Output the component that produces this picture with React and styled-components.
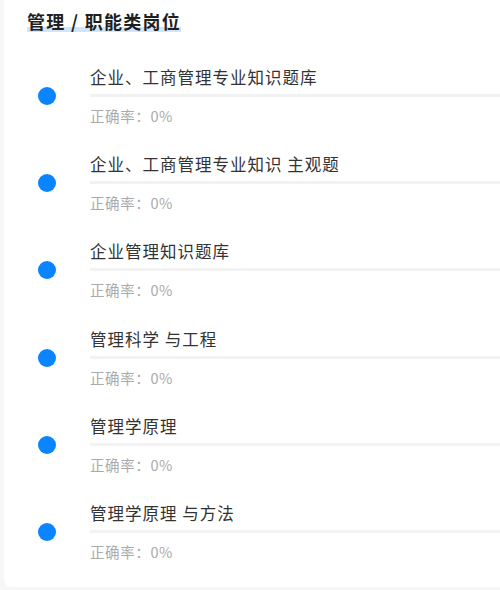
import React from "react";
import styled, { createGlobalStyle } from "styled-components";

const Global = createGlobalStyle`
  html, body { margin: 0; padding: 0; background: #f7f7f7; overflow: hidden; }
  body { font-family: "Noto Sans CJK SC", "Noto Sans", sans-serif; }
`;

const Page = styled.div`
  width: 500px;
  height: 590px;
  overflow: hidden;
`;

const Card = styled.section`
  margin: -10px 0 0 4px;
  width: 520px;
  height: 597px;
  box-sizing: border-box;
  background: #fff;
  border-radius: 8px;
  padding: 18px 0 0 23px;
`;

const Heading = styled.h2`
  margin: 0;
  font-size: 18px;
  line-height: 26px;
  font-weight: 700;
  color: #1f1f1f;
  letter-spacing: 1.3px;
`;

const Mark = styled.span`
  background: linear-gradient(to top, transparent 0, transparent 2px, #cfe5fb 2px, #cfe5fb 7px, transparent 7px);
`;

const List = styled.ul`
  list-style: none;
  margin: 31px 0 0;
  padding: 0;
  display: flex;
  flex-direction: column;
  gap: 25.2px;
`;

const Item = styled.li`
  display: flex;
  align-items: center;
`;

const Dot = styled.span`
  flex: none;
  width: 18px;
  height: 18px;
  border-radius: 50%;
  background: #0a84ff;
  margin: 0 34px 0 11px;
`;

const Body = styled.div`
  flex: 1;
  display: flex;
  flex-direction: column;
`;

const Name = styled.div`
  font-size: 16.5px;
  line-height: 24px;
  color: #333;
  letter-spacing: 1px;
`;

const Bar = styled.div`
  height: 3px;
  margin-top: 5px;
  background: #f2f2f2;
`;

const Rate = styled.div`
  margin-top: 8px;
  font-size: 14.5px;
  line-height: 22px;
  color: #aaa;
  letter-spacing: 0.6px;
`;

const items = [
  "企业、工商管理专业知识题库",
  "企业、工商管理专业知识 主观题",
  "企业管理知识题库",
  "管理科学 与工程",
  "管理学原理",
  "管理学原理 与方法",
];

export default function App() {
  return (
    <Page>
      <Global />
      <Card>
        <Heading>
          <Mark>管理 / 职能类岗位</Mark>
        </Heading>
        <List>
          {items.map((t) => (
            <Item key={t}>
              <Dot />
              <Body>
                <Name>{t}</Name>
                <Bar />
                <Rate>正确率：0%</Rate>
              </Body>
            </Item>
          ))}
        </List>
      </Card>
    </Page>
  );
}
